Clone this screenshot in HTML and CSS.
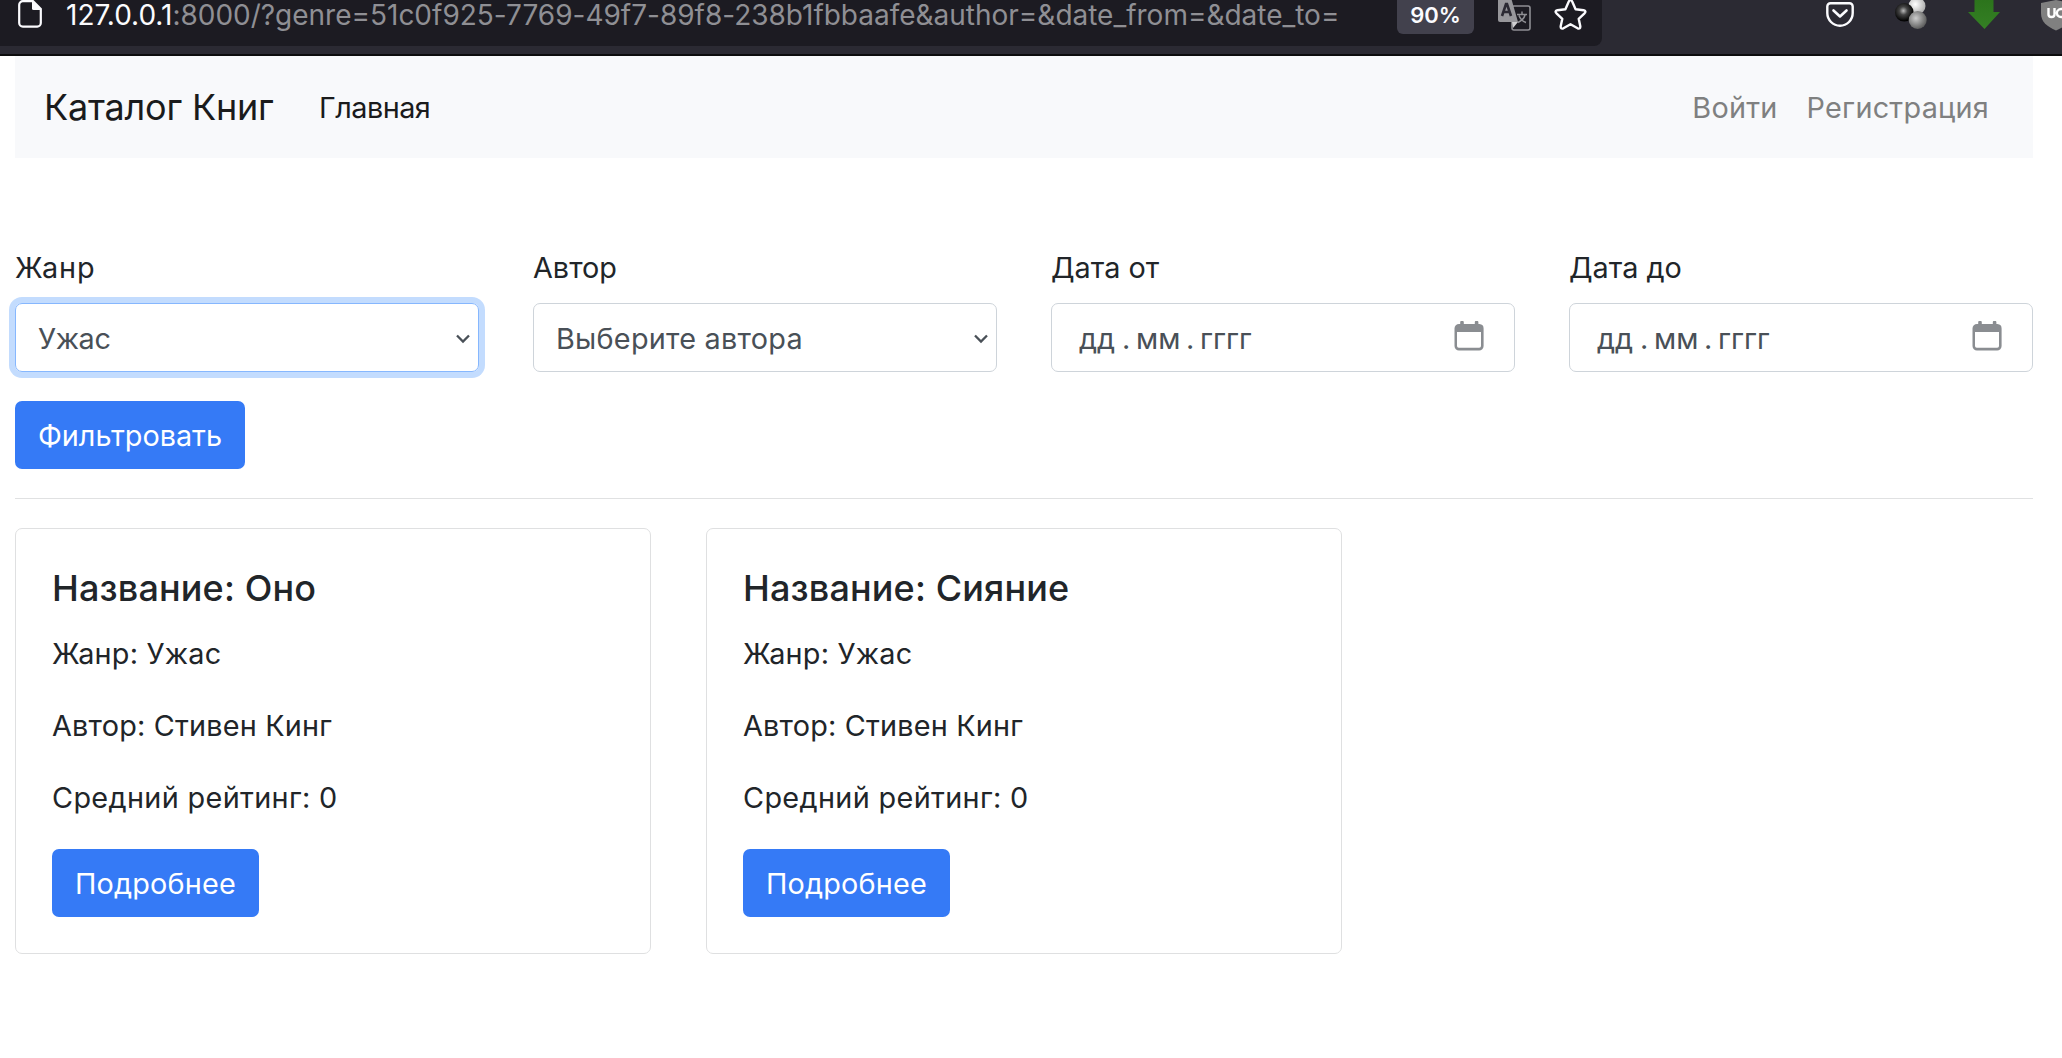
FILE: index.html
```html
<!DOCTYPE html>
<html lang="ru">
<head>
<meta charset="utf-8">
<title>Каталог Книг</title>
<link rel="stylesheet" href="styles.css">
</head>
<body>
<header class="toolbar">
  <div class="urlbar">
    <svg class="icon-page" width="24" height="28" viewBox="0 0 24 28"><path d="M5 1.200H15L22.800 9V23a3.600 3.600 0 0 1-3.600 3.600H4.800A3.600 3.600 0 0 1 1.200 23V4.800A3.600 3.600 0 0 1 5 1.200Z" fill="none" stroke="#fbfbfe" stroke-width="2.200"/><path d="M14 1v7.500a1.500 1.500 0 0 0 1.500 1.500H23Z" fill="#fbfbfe"/></svg>
    <div class="url"><span class="url-host">127.0.0.1</span><span class="url-path">:8000/?genre=51c0f925-7769-49f7-89f8-238b1fbbaafe&amp;author=&amp;date_from=&amp;date_to=</span></div>
    <div class="zoom-badge">90%</div>
    <svg class="icon-translate" width="33" height="31" viewBox="0 0 33 31"><rect x="14" y="6" width="18" height="24" rx="2" fill="#1c1b22" stroke="#8f8f94" stroke-width="1.600"/><path d="M19 14.500h10M24 11.500v3M27 15c-1 4-4 6-7 7.500M21 15.500c1 3 4 6 7 7" fill="none" stroke="#8f8f94" stroke-width="1.500"/><path d="M2-6H12L20 22H2a2 2 0 0 1-2-2V-6Z" fill="#97979b"/><path d="M14 22h6l-5 6Z" fill="#d0d0d2"/><path d="M4 16 8 4h1l4 12M5.500 12h6" fill="none" stroke="#2b2a33" stroke-width="2.600"/></svg>
    <svg class="icon-star" width="33" height="31" viewBox="0 0 33 31"><path d="M14.800 1.500Q16.500-1.500 18.200 1.500L21.600 9.200L29.600 10.200Q32.600 11 30.500 13.300L24.700 18.800L26.300 26.300Q26.500 29.400 23.600 28.300L16.500 24.300L9.400 28.300Q6.500 29.400 6.700 26.300L8.300 18.800L2.500 13.300Q.4 11 3.400 10.200L11.400 9.200Z" fill="none" stroke="#fbfbfe" stroke-width="2.400" stroke-linejoin="round"/></svg>
  </div>
  <div class="extensions">
    <svg width="28" height="29" viewBox="0 0 28 29"><path d="M4.500 3.200h19a3.200 3.200 0 0 1 3.200 3.200V13a12.700 12.700 0 0 1-25.400 0V6.400a3.200 3.200 0 0 1 3.200-3.200Z" fill="none" stroke="#fbfbfe" stroke-width="2.400"/><path d="m7.500 10.500 6.500 6 6.500-6" fill="none" stroke="#fbfbfe" stroke-width="2.600" stroke-linecap="round" stroke-linejoin="round"/></svg>
    <svg width="32" height="30" viewBox="0 0 32 30"><defs><radialGradient id="white" cx=".4" cy=".4" r=".65"><stop stop-color="#fff"/><stop offset="1" stop-color="#aaa"/></radialGradient><radialGradient id="black" cx=".45" cy=".42" r=".55"><stop stop-color="#bbb"/><stop offset=".4" stop-color="#444"/><stop offset="1" stop-color="#000"/></radialGradient><radialGradient id="grey" cx=".4" cy=".4" r=".65"><stop stop-color="#ccc"/><stop offset="1" stop-color="#555"/></radialGradient></defs><circle cx="22" cy="6" r="8.500" fill="url(#white)"/><circle cx="9.300" cy="12.300" r="9.300" fill="url(#black)"/><circle cx="22.700" cy="20" r="9" fill="url(#grey)"/></svg>
    <svg width="32" height="30" viewBox="0 0 32 30"><defs><linearGradient id="green" x2="0" y2="1"><stop stop-color="#2c741c"/><stop offset="1" stop-color="#348024"/></linearGradient></defs><path d="M6.500 0h19v12H32L16.500 29 0 12h6.500Z" fill="url(#green)"/></svg>
    <svg width="21" height="31" viewBox="0 0 21 31"><path d="M15 0 0 3v10c0 9 6 13.500 15 17.500C24 26.500 30 22 30 13V3Z" fill="#808080"/><path d="M7.500 8v6.500c0 3.300 6 3.300 6 0V8M22.500 9.500a4.500 4 0 1 0 0 7M22.500 8v9" fill="none" stroke="#fff" stroke-width="2.400"/></svg>
  </div>
</header>
<main class="page">
  <nav class="navbar">
    <a class="brand">Каталог Книг</a>
    <a class="nav-link active">Главная</a>
    <div class="nav-right"><a class="nav-link">Войти</a><a class="nav-link">Регистрация</a></div>
  </nav>
  <form class="filters">
    <div class="field"><label class="label-genre">Жанр</label>
      <div class="control select focused"><span class="value">Ужас</span><svg width="16" height="12" viewBox="0 0 16 12"><path d="m2 2.500 6 6 6-6" fill="none" stroke="#495057" stroke-width="2.300"/></svg></div></div>
    <div class="field"><label>Автор</label>
      <div class="control select"><span class="placeholder">Выберите автора</span><svg width="16" height="12" viewBox="0 0 16 12"><path d="m2 2.500 6 6 6-6" fill="none" stroke="#495057" stroke-width="2.300"/></svg></div></div>
    <div class="field"><label>Дата от</label>
      <div class="control date"><span class="dd">дд</span><span class="dot">.</span><span class="mm">мм</span><span class="dot">.</span><span>гггг</span><svg width="30" height="30" viewBox="0 0 30 30"><path d="M6.200 1.500a1.800 1.800 0 0 1 3.600 0V3h11V1.500a1.800 1.800 0 0 1 3.600 0V3h1a4.500 4.500 0 0 1 4.200 4.500V25a4.500 4.500 0 0 1-4.500 4.500H5A4.500 4.500 0 0 1 .5 25V7.500A4.500 4.500 0 0 1 5 3h1.200ZM3 11v14a1.800 1.800 0 0 0 1.800 1.800h20.400A1.800 1.800 0 0 0 27 25V11Z" fill="#8a8d91"/></svg></div></div>
    <div class="field"><label>Дата до</label>
      <div class="control date"><span class="dd">дд</span><span class="dot">.</span><span class="mm">мм</span><span class="dot">.</span><span>гггг</span><svg width="30" height="30" viewBox="0 0 30 30"><path d="M6.200 1.500a1.800 1.800 0 0 1 3.600 0V3h11V1.500a1.800 1.800 0 0 1 3.600 0V3h1a4.500 4.500 0 0 1 4.200 4.500V25a4.500 4.500 0 0 1-4.500 4.500H5A4.500 4.500 0 0 1 .5 25V7.500A4.500 4.500 0 0 1 5 3h1.200ZM3 11v14a1.800 1.800 0 0 0 1.800 1.800h20.400A1.800 1.800 0 0 0 27 25V11Z" fill="#8a8d91"/></svg></div></div>
    <button class="btn btn-filter" type="button">Фильтровать</button>
  </form>
  <hr class="divider">
  <section class="cards">
    <article class="card">
      <h5 class="card-title">Название: Оно</h5>
      <p>Жанр: Ужас</p>
      <p>Автор: Стивен Кинг</p>
      <p class="rating">Средний рейтинг: 0</p>
      <a class="btn">Подробнее</a>
    </article>
    <article class="card">
      <h5 class="card-title">Название: Сияние</h5>
      <p>Жанр: Ужас</p>
      <p>Автор: Стивен Кинг</p>
      <p class="rating">Средний рейтинг: 0</p>
      <a class="btn">Подробнее</a>
    </article>
  </section>
</main>
</body>
</html>
```
FILE: styles.css
```css
* { box-sizing: border-box; }
body {
  margin: 0;
  background: #fff;
  color: #212529;
  font-family: Inter, "Liberation Sans", sans-serif;
  font-size: 28.800px;
  line-height: 43.200px;
  white-space: nowrap;
}

/* Browser toolbar */
.toolbar {
  display: flex;
  align-items: flex-start;
  height: 56px;
  overflow: hidden;
  background: #2b2a33;
  border-bottom: 2px solid #0c0c0d;
}
.toolbar svg { flex: none; }
.urlbar {
  display: flex;
  flex: none;
  width: 1602px;
  height: 46px;
  padding-left: 18px;
  background: #1c1b22;
  border-bottom-right-radius: 8px;
}
.url { flex: none; width: 1315px; margin: 0 0 0 24px; height: 34px; line-height: 31px; font-size: 28px; letter-spacing: -.01px; }
.url-host { color: #fbfbfe; }
.url-path { color: #8f8f94; }
.zoom-badge {
  flex: none;
  width: 77px;
  height: 34px;
  margin-left: 16px;
  line-height: 31px;
  text-align: center;
  font-size: 22px;
  font-weight: 600;
  color: #fbfbfe;
  background: #42414d;
  border-radius: 0 0 6px 6px;
}
.icon-translate { margin-left: 24px; }
.icon-star { margin-left: 23px; }
.extensions { display: flex; flex: none; gap: 41px; padding-left: 224px; }

/* Page */
.page { padding: 0 29px 0 15px; }
.navbar {
  display: flex;
  align-items: center;
  height: 102px;
  padding: 2px 44px 0 29px;
  background: #f8f9fb;
}
.brand { font-size: 36px; color: #1a1b1c; width: 275px; letter-spacing: -.2px; }
.nav-link { color: #7f8080; letter-spacing: .25px; }
.nav-link.active { color: #1a1b1c; letter-spacing: -.5px; }
.nav-right { display: flex; gap: 29px; margin-left: auto; }

.filters { display: grid; grid-template-columns: repeat(4, 464px); column-gap: 54px; padding-top: 88px; }
.field label { display: block; height: 57px; }
.field .label-genre { letter-spacing: .9px; }
.control {
  display: flex;
  align-items: center;
  height: 69px;
  padding-top: 2px;
  border: 1px solid #ced4da;
  border-radius: 7px;
  color: #495057;
}
.select { justify-content: space-between; padding-right: 7px; padding-left: 22px; }
.value { letter-spacing: -.4px; }
.placeholder { letter-spacing: .25px; }
.focused { border-color: #86b7fe; box-shadow: 0 0 0 6px #c3dcfe; }
.date { padding-right: 30px; padding-left: 27px; }
.date svg { margin: -6px 0 0 auto; }
.dd { width: 43px; }
.mm { width: 50px; }
.dot { width: 14px; }
.btn {
  display: block;
  width: 207px;
  height: 68px;
  padding: 2px 0 0;
  border: 0;
  border-radius: 7px;
  background: #357af6;
  color: #fff;
  font: inherit;
  line-height: 66px;
  letter-spacing: .2px;
  text-align: center;
}
.btn-filter { width: 230px; margin-top: 29px; letter-spacing: 0; }
.divider { height: 1px; margin: 29px 0; border: 0; background: #e0e1e2; }

.cards { display: flex; gap: 55px; }
.card { width: 636px; height: 426px; padding: 38px 36px 0; border: 1px solid #dfe0e1; border-radius: 7px; }
.card-title { margin: 0 0 22px; font-size: 36px; font-weight: 500; line-height: 43px; letter-spacing: .15px; }
.card p { margin: 0 0 29px; letter-spacing: .2px; }
.card .rating { margin-bottom: 29px; letter-spacing: .35px; }
```
